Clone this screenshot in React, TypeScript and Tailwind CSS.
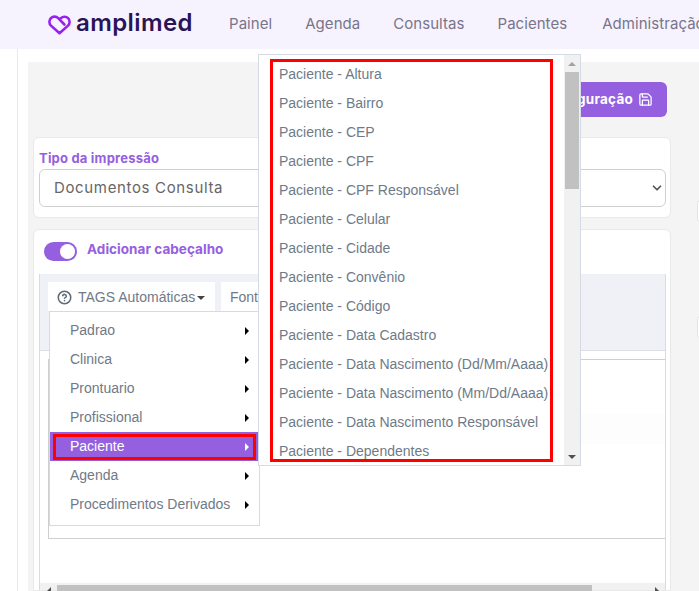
import { CircleHelp, Save, ChevronDown } from "lucide-react";

const nav = ["Painel", "Agenda", "Consultas", "Pacientes"];
const menu = ["Padrao", "Clinica", "Prontuario", "Profissional", "Paciente", "Agenda", "Procedimentos Derivados"];
const tags = [
  "Paciente - Altura",
  "Paciente - Bairro",
  "Paciente - CEP",
  "Paciente - CPF",
  "Paciente - CPF Responsável",
  "Paciente - Celular",
  "Paciente - Cidade",
  "Paciente - Convênio",
  "Paciente - Código",
  "Paciente - Data Cadastro",
  "Paciente - Data Nascimento (Dd/Mm/Aaaa)",
  "Paciente - Data Nascimento (Mm/Dd/Aaaa)",
  "Paciente - Data Nascimento Responsável",
  "Paciente - Dependentes",
];

function Logo() {
  return (
    <div className="flex items-center gap-[5px] w-[181px] shrink-0">
      <svg width="23" height="20" viewBox="0 0 23 20" fill="none" className="shrink-0">
        <path
          d="M11.5 18.2 3 10.6C.9 8.6.9 5.2 2.9 3.2 5 1.1 8.2 1.2 10.2 3.2l6.2 6.3M11.7 4.2l1.2-1c2-2 5.2-2 7.2 0 2 2 2 5.4-.1 7.4l-8.5 7.6"
          stroke="#9a1ff2"
          strokeWidth="2.6"
          strokeLinecap="round"
          strokeLinejoin="round"
        />
      </svg>
      <span className="font-['Inter',sans-serif] font-semibold text-[24px] leading-none tracking-[0.4px] text-[#2a1458] -mt-[3px]">
        amplimed
      </span>
    </div>
  );
}

function Arrow({ light }: { light?: boolean }) {
  return (
    <span
      className={
        light
          ? "w-0 h-0 border-y-[4px] border-y-transparent border-l-[4px] border-l-white"
          : "w-0 h-0 border-y-[4px] border-y-transparent border-l-[4px] border-l-black"
      }
    />
  );
}

export default function App() {
  return (
    <div className="relative w-[699px] h-[591px] overflow-hidden bg-white font-['Liberation_Sans',sans-serif]">
      <header className="h-[49px] bg-[#f6f3fe] flex items-center pl-[48px] whitespace-nowrap">
        <Logo />
        <nav className="flex gap-[33px] font-['Inter',sans-serif] text-[15px] tracking-[0.05px] text-[#79758a]">
          {nav.map((n) => (
            <span key={n}>{n}</span>
          ))}
          <span className="ml-[2px]">Administração</span>
        </nav>
      </header>

      <div className="flex h-[542px]">
        <div className="w-[18px] shrink-0 border-r border-[#e9e9ec]" />
        <main className="ml-[10px] mt-[13px] flex-1 bg-[#f4f4f4] pl-[5px] pt-[20px] flex">
          <div className="w-[638px] shrink-0 flex flex-col">
            <div className="flex justify-end pr-[4px]">
              <button className="h-[35px] px-[14px] rounded-[6px] bg-[#9560e0] text-white font-['Inter',sans-serif] font-bold text-[13.5px] tracking-[0.25px] flex items-center gap-[5px] whitespace-nowrap">
                Salvar Configuração
                <Save size={15} strokeWidth={2} />
              </button>
            </div>

            <section className="mt-[20px] h-[81px] rounded-[6px] border border-[#e9e9e9] bg-white pl-[5px] pr-[4px] pt-[12px]">
              <label className="block font-['Inter',sans-serif] font-bold text-[13px] leading-[17px] tracking-[0.2px] text-[#9560e0]">
                Tipo da impressão
              </label>
              <div className="mt-[2px] h-[38px] rounded-[6px] border border-[#cfcfcf] flex items-center justify-between pl-[14px] pr-[1px]">
                <span className="font-['Inter',sans-serif] text-[15px] tracking-[0.65px] text-[#666]">
                  Documentos Consulta
                </span>
                <ChevronDown size={14} strokeWidth={3} className="text-[#555]" />
              </div>
            </section>

            <section className="mt-[11px] flex-1 rounded-t-[6px] border border-[#e9e9e9] bg-white px-[5px] pt-[11px] flex flex-col">
              <div className="flex items-center gap-[10px] pl-[5px] h-[20px]">
                <div className="w-[33px] h-[19px] rounded-full bg-[#9560e0] flex items-center justify-end pr-[2px]">
                  <span className="w-[15px] h-[15px] rounded-full bg-white" />
                </div>
                <span className="font-['Inter',sans-serif] font-bold text-[13.5px] tracking-[0.05px] text-[#9560e0] -mt-[3px]">
                  Adicionar cabeçalho
                </span>
              </div>

              <div className="mt-[13px] w-[627px] flex-1 border-x border-[#d8dbe6] flex flex-col">
                <div className="h-[77px] bg-[#f0f1f6] border-b border-[#dcdfe8] pl-[8px] pt-[8px] flex gap-[6px] items-start shrink-0">
                  <div className="relative w-[167px] h-[29px] bg-white flex items-center pl-[9px] pt-[2px] gap-[6px] text-[14px] text-[#6f7a88] whitespace-nowrap">
                    <CircleHelp size={15} strokeWidth={2.5} className="text-[#5f6b78]" />
                    <span>TAGS Automáticas</span>
                    <span className="w-0 h-0 ml-[-4px] border-x-[4px] border-x-transparent border-t-[4px] border-t-[#444]" />
                    <div className="absolute left-[1px] top-[29px] w-[211px] h-[215px] bg-white border border-[#d5dbe4] z-10 pt-[4px]">
                      {menu.map((m) => {
                        const on = m === "Paciente";
                        return (
                          <div
                            key={m}
                            className={
                              on
                                ? "relative h-[29px] flex items-center justify-between pl-[20px] pr-[10px] bg-[#9560e0] text-white"
                                : "relative h-[29px] flex items-center justify-between pl-[20px] pr-[10px] text-[#6f7a88]"
                            }
                          >
                            <span>{m}</span>
                            <Arrow light={on} />
                            {on && <span className="absolute left-[3px] right-[3px] top-[2px] bottom-[1px] border-[3px] border-[#ff0000]" />}
                          </div>
                        );
                      })}
                    </div>
                  </div>
                  <div className="w-[300px] h-[29px] bg-white flex items-center pl-[9px] pt-[2px] text-[14px] text-[#6f7a88]">
                    Font
                  </div>
                </div>
                <div className="flex-1 pl-[8px] pt-[8px]">
                  <div className="h-[180px] border-t border-l border-b border-[#cfcfcf] pt-[54px]">
                    <div className="h-[30px] bg-[#fdfdfd]" />
                  </div>
                </div>
                <div className="h-[7px] bg-[#f1f1f1] flex items-start mt-[-1px]">
                  <div className="w-[17px] h-[7px] flex justify-center pt-[4px]">
                    <span className="w-0 h-0 border-y-[4px] border-y-transparent border-r-[4px] border-r-[#505050]" />
                  </div>
                  <div className="mt-[2px] w-[535px] h-[12px] bg-[#c1c1c1]" />
                  <div className="flex-1" />
                  <div className="w-[17px] h-[7px] flex justify-center pt-[4px]">
                    <span className="w-0 h-0 border-y-[4px] border-y-transparent border-l-[4px] border-l-[#505050]" />
                  </div>
                </div>
              </div>
            </section>
          </div>

          <aside className="ml-[26px] flex flex-col shrink-0">
            <div className="mt-[118px] w-[6px] h-[22px] rounded-l-[3px] border border-[#e4e4e4] bg-white" />
            <div className="mt-[94px] w-[6px] h-[22px] rounded-l-[3px] border border-[#e4e4e4] bg-white" />
          </aside>
        </main>
      </div>

      <div className="absolute left-[258px] top-[54px] w-[323px] h-[412px] bg-white border border-[#d5dbe4] flex z-20">
        <ul className="flex-1 overflow-hidden pt-[5px] pl-[20px] text-[14px] text-[#6f7a88] whitespace-nowrap">
          {tags.map((t) => (
            <li key={t} className="h-[29px] leading-[29px]">
              {t}
            </li>
          ))}
        </ul>
        <div className="w-[16px] bg-[#f1f1f1] flex flex-col items-center shrink-0">
          <div className="h-[17px] flex items-center justify-center">
            <span className="w-0 h-0 border-x-[4px] border-x-transparent border-b-[4px] border-b-[#a3a3a3]" />
          </div>
          <div className="w-[14px] h-[117px] bg-[#c1c1c1]" />
          <div className="flex-1" />
          <div className="h-[17px] flex items-center justify-center">
            <span className="w-0 h-0 border-x-[4px] border-x-transparent border-t-[4px] border-t-[#505050]" />
          </div>
        </div>
        <div className="absolute left-[11px] top-[4px] w-[283px] h-[403px] border-[3px] border-[#ff0000]" />
      </div>
    </div>
  );
}
